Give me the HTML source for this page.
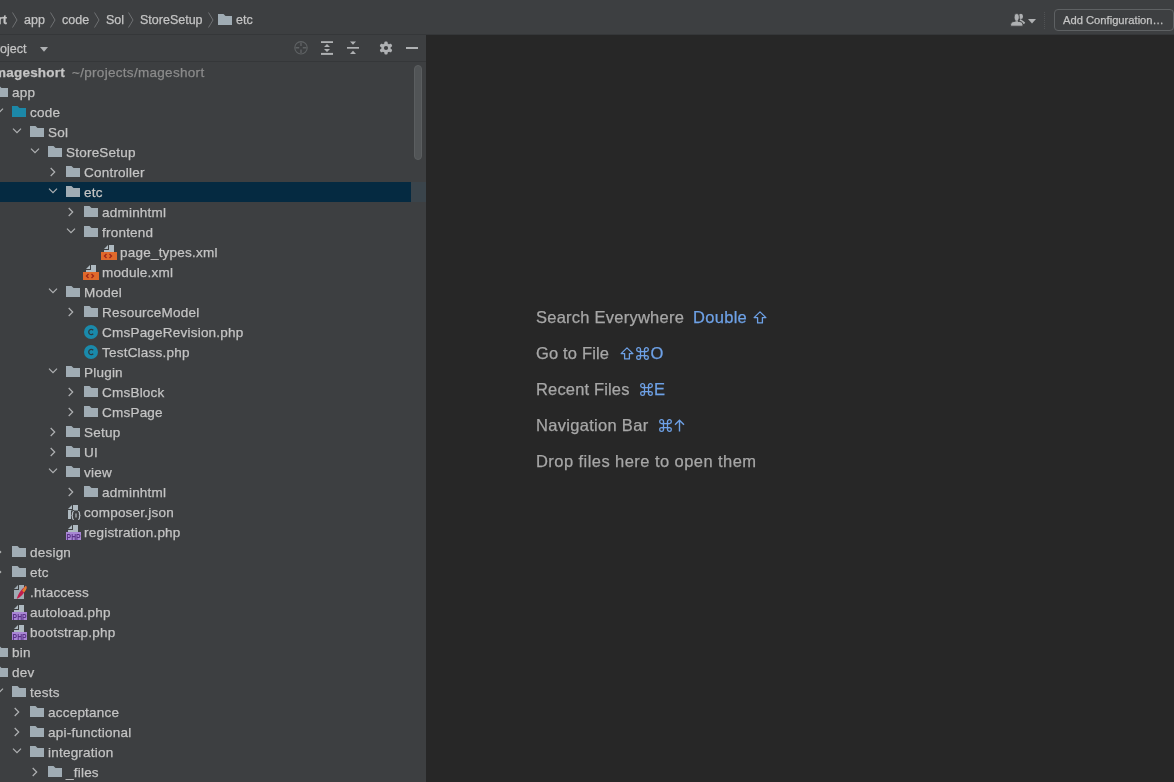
<!DOCTYPE html>
<html><head><meta charset="utf-8"><style>
*{margin:0;padding:0;box-sizing:border-box}
html,body{width:1174px;height:782px;overflow:hidden;background:#272727;font-family:"Liberation Sans",sans-serif;color:#c4c4c4}
.abs{position:absolute}
#top,#panel,#editor{will-change:transform}
#top{position:absolute;left:0;top:0;width:1174px;height:35px;background:#3d3f41;border-bottom:1px solid #353739}
#panel{position:absolute;left:0;top:35px;width:426px;height:747px;background:#3d3f41;overflow:hidden}
#phead{position:absolute;left:0;top:0;width:426px;height:27px;border-bottom:1px solid #353739}
#editor{position:absolute;left:426px;top:35px;width:748px;height:747px;background:#272727}
.row{position:absolute;left:0;width:411px;height:20px}
.row.sel{background:#052a41}
.t{position:absolute;top:0.8px;line-height:20px;font-size:13.5px;white-space:nowrap;letter-spacing:0.22px}
.t,.bc,.hint{-webkit-text-stroke-width:0.25px}
.t.b{font-weight:bold}
.t.g{color:#8b8b8b}
.ic{position:absolute;overflow:visible}
.bc{position:absolute;top:3px;line-height:34px;font-size:12.5px;white-space:nowrap;color:#c4c4c4}
.hint{position:absolute;left:110px;font-size:16.5px;letter-spacing:0.3px;white-space:nowrap;color:#a7a7a7;line-height:20px}
.hint.blue{color:#6ea1e6}
</style></head><body>
<div id="top">
  <span class="bc b" style="left:-57px;font-weight:bold">mageshort</span>
  <svg class="ic" style="left:12px;top:12px" width="6" height="16" viewBox="0 0 6 16"><path d="M0.5 0.5L5 8L0.5 15.5" fill="none" stroke="#6e7072" stroke-width="1"/></svg>
  <span class="bc" style="left:24px">app</span>
  <svg class="ic" style="left:50px;top:12px" width="6" height="16" viewBox="0 0 6 16"><path d="M0.5 0.5L5 8L0.5 15.5" fill="none" stroke="#6e7072" stroke-width="1"/></svg>
  <span class="bc" style="left:62px">code</span>
  <svg class="ic" style="left:94px;top:12px" width="6" height="16" viewBox="0 0 6 16"><path d="M0.5 0.5L5 8L0.5 15.5" fill="none" stroke="#6e7072" stroke-width="1"/></svg>
  <span class="bc" style="left:106px">Sol</span>
  <svg class="ic" style="left:128px;top:12px" width="6" height="16" viewBox="0 0 6 16"><path d="M0.5 0.5L5 8L0.5 15.5" fill="none" stroke="#6e7072" stroke-width="1"/></svg>
  <span class="bc" style="left:140px">StoreSetup</span>
  <svg class="ic" style="left:208px;top:12px" width="6" height="16" viewBox="0 0 6 16"><path d="M0.5 0.5L5 8L0.5 15.5" fill="none" stroke="#6e7072" stroke-width="1"/></svg>
  <svg class="ic" style="left:218px;top:14px" width="14" height="11" viewBox="0 0 14 11"><path d="M0 0H5.5L7.5 2H14V11H0Z" fill="#a0acb4"/></svg>
  <span class="bc" style="left:236px">etc</span>
  <!-- right -->
  <svg class="ic" style="left:1010px;top:13px" width="16" height="14" viewBox="0 0 16 14">
    <ellipse cx="10.9" cy="3.4" rx="2.1" ry="2.6" fill="#afb1b3"/>
    <path d="M10.5 6L15.2 9.6L14 11.2L9.5 7.6Z" fill="#afb1b3"/>
    <path d="M6.7 0.6C8.4 0.6 9.3 2.2 9.3 4.2C9.3 5.8 8.6 7 8 7.6V8.2H5.4V7.6C4.8 7 4.1 5.8 4.1 4.2C4.1 2.2 5 0.6 6.7 0.6Z" fill="#afb1b3" stroke="#3d3f41" stroke-width="0.9"/>
    <path d="M0.6 13.2V11.6Q0.6 8.4 4.2 8.4H9.2Q12.9 8.4 12.9 11.6V13.2Z" fill="#afb1b3" stroke="#3d3f41" stroke-width="0.9"/>
    <path d="M5.4 7.5H8V8.8H5.4Z" fill="#afb1b3"/>
  </svg>
  <svg class="ic" style="left:1028px;top:19px" width="8" height="5" viewBox="0 0 8 5"><path d="M0 0H8L4 4.5Z" fill="#afb1b3"/></svg>
  <div class="abs" style="left:1044px;top:12px;width:1px;height:17px;border-left:1px dotted #505254"></div>
  <div class="abs" style="left:1054px;top:9px;width:120px;height:22px;border:1px solid #5e6163;border-radius:4px"></div>
  <span class="bc" style="left:1063px;font-size:11.2px;top:2.5px;line-height:34px">Add Configuration…</span>
</div>
<div id="panel">
  <div id="phead">
    <span class="bc" style="left:-12.4px;top:1px;line-height:27px;font-size:12.5px">Project</span>
    <svg class="ic" style="left:40px;top:12px" width="8" height="5" viewBox="0 0 8 5"><path d="M0 0H8L4 4.8Z" fill="#afb1b3"/></svg>
    <!-- locate -->
    <svg class="ic" style="left:294px;top:6px" width="14" height="14" viewBox="0 0 14 14"><circle cx="7" cy="6.8" r="6.2" fill="none" stroke="#5f6264" stroke-width="1.1"/><path d="M7 1.5V5M7 8.6V12.1M1.5 6.8H5.2M8.8 6.8H12.5" stroke="#5f6264" stroke-width="1.4"/></svg>
    <!-- expand -->
    <svg class="ic" style="left:320px;top:5px" width="14" height="16" viewBox="0 0 14 16"><rect x="1" y="1.2" width="12" height="1.8" fill="#afb1b3"/><rect x="1" y="12.9" width="12" height="2" fill="#afb1b3"/><path d="M4 7.1L7 4L10 7.1Z M4 8.9H10L7 11.9Z" fill="#afb1b3"/></svg>
    <!-- collapse -->
    <svg class="ic" style="left:347px;top:6px" width="12" height="14" viewBox="0 0 12 14"><path d="M3 0.5H9L6 3.7Z M3 13L6 9.8L9 13Z" fill="#afb1b3"/><rect x="0" y="6" width="12" height="1.7" fill="#afb1b3"/></svg>
    <!-- gear -->
    <svg class="ic" style="left:379px;top:6px" width="14" height="14" viewBox="0 0 14 14"><g fill="#afb1b3"><circle cx="7" cy="7" r="4.7"/><rect x="5.4" y="0.4" width="3.2" height="3.4" rx="1.1" transform="rotate(0 7 7)"/><rect x="5.4" y="0.4" width="3.2" height="3.4" rx="1.1" transform="rotate(60 7 7)"/><rect x="5.4" y="0.4" width="3.2" height="3.4" rx="1.1" transform="rotate(120 7 7)"/><rect x="5.4" y="0.4" width="3.2" height="3.4" rx="1.1" transform="rotate(180 7 7)"/><rect x="5.4" y="0.4" width="3.2" height="3.4" rx="1.1" transform="rotate(240 7 7)"/><rect x="5.4" y="0.4" width="3.2" height="3.4" rx="1.1" transform="rotate(300 7 7)"/></g><circle cx="7" cy="7" r="2.1" fill="#3d3f41"/></svg>
    <rect></rect>
    <div class="abs" style="left:406px;top:12px;width:12px;height:2px;background:#afb1b3"></div>
  </div>
  <div id="tree" class="abs" style="left:0;top:-35px;width:426px;height:782px">
<div class="row" style="top:62px"><span class="t b" style="left:-6px">mageshort</span><span class="t g" style="left:72px;letter-spacing:0.3px">~/projects/mageshort</span></div>
<div class="row" style="top:82px"><svg class="ic" style="left:-24.5px;top:6px" width="10" height="6" viewBox="0 0 10 6"><path d="M1 0.7L5 4.7L9 0.7" fill="none" stroke="#afb1b3" stroke-width="1.2"/></svg><svg class="ic" style="left:-6px;top:4px" width="14" height="11" viewBox="0 0 14 11"><path d="M0 0H5.5L7.5 2H14V11H0Z" fill="#a0acb4"/></svg><span class="t" style="left:12px">app</span></div>
<div class="row" style="top:102px"><svg class="ic" style="left:-6.5px;top:6px" width="10" height="6" viewBox="0 0 10 6"><path d="M1 0.7L5 4.7L9 0.7" fill="none" stroke="#afb1b3" stroke-width="1.2"/></svg><svg class="ic" style="left:12px;top:4px" width="14" height="11" viewBox="0 0 14 11"><path d="M0 0H5.5L7.5 2H14V11H0Z" fill="#1c88a8"/></svg><span class="t" style="left:30px">code</span></div>
<div class="row" style="top:122px"><svg class="ic" style="left:11.5px;top:6px" width="10" height="6" viewBox="0 0 10 6"><path d="M1 0.7L5 4.7L9 0.7" fill="none" stroke="#afb1b3" stroke-width="1.2"/></svg><svg class="ic" style="left:30px;top:4px" width="14" height="11" viewBox="0 0 14 11"><path d="M0 0H5.5L7.5 2H14V11H0Z" fill="#a0acb4"/></svg><span class="t" style="left:48px">Sol</span></div>
<div class="row" style="top:142px"><svg class="ic" style="left:29.5px;top:6px" width="10" height="6" viewBox="0 0 10 6"><path d="M1 0.7L5 4.7L9 0.7" fill="none" stroke="#afb1b3" stroke-width="1.2"/></svg><svg class="ic" style="left:48px;top:4px" width="14" height="11" viewBox="0 0 14 11"><path d="M0 0H5.5L7.5 2H14V11H0Z" fill="#a0acb4"/></svg><span class="t" style="left:66px">StoreSetup</span></div>
<div class="row" style="top:162px"><svg class="ic" style="left:49.5px;top:5px" width="6" height="10" viewBox="0 0 6 10"><path d="M0.7 1L4.7 5L0.7 9" fill="none" stroke="#afb1b3" stroke-width="1.2"/></svg><svg class="ic" style="left:66px;top:4px" width="14" height="11" viewBox="0 0 14 11"><path d="M0 0H5.5L7.5 2H14V11H0Z" fill="#a0acb4"/></svg><span class="t" style="left:84px">Controller</span></div>
<div class="row sel" style="top:182px"><svg class="ic" style="left:47.5px;top:6px" width="10" height="6" viewBox="0 0 10 6"><path d="M1 0.7L5 4.7L9 0.7" fill="none" stroke="#afb1b3" stroke-width="1.2"/></svg><svg class="ic" style="left:66px;top:4px" width="14" height="11" viewBox="0 0 14 11"><path d="M0 0H5.5L7.5 2H14V11H0Z" fill="#a0acb4"/></svg><span class="t" style="left:84px">etc</span></div>
<div class="row" style="top:202px"><svg class="ic" style="left:67.5px;top:5px" width="6" height="10" viewBox="0 0 6 10"><path d="M0.7 1L4.7 5L0.7 9" fill="none" stroke="#afb1b3" stroke-width="1.2"/></svg><svg class="ic" style="left:84px;top:4px" width="14" height="11" viewBox="0 0 14 11"><path d="M0 0H5.5L7.5 2H14V11H0Z" fill="#a0acb4"/></svg><span class="t" style="left:102px">adminhtml</span></div>
<div class="row" style="top:222px"><svg class="ic" style="left:65.5px;top:6px" width="10" height="6" viewBox="0 0 10 6"><path d="M1 0.7L5 4.7L9 0.7" fill="none" stroke="#afb1b3" stroke-width="1.2"/></svg><svg class="ic" style="left:84px;top:4px" width="14" height="11" viewBox="0 0 14 11"><path d="M0 0H5.5L7.5 2H14V11H0Z" fill="#a0acb4"/></svg><span class="t" style="left:102px">frontend</span></div>
<div class="row" style="top:242px"><svg class="ic" style="left:103.5px;top:3px" width="10" height="7" viewBox="0 0 10 7"><path d="M0 4L4 0V4Z" fill="#aeb9c0"/><path d="M5 0H10V7H0V5H5Z" fill="#aeb9c0"/></svg><svg class="ic" style="left:101px;top:10px" width="16" height="8" viewBox="0 0 16 8"><rect width="16" height="8" fill="#e0692b"/><path d="M5.5 2L3.5 4L5.5 6M8.5 2L10.5 4L8.5 6" fill="none" stroke="#9c2418" stroke-width="1.3"/></svg><span class="t" style="left:120px">page_types.xml</span></div>
<div class="row" style="top:262px"><svg class="ic" style="left:85.5px;top:3px" width="10" height="7" viewBox="0 0 10 7"><path d="M0 4L4 0V4Z" fill="#aeb9c0"/><path d="M5 0H10V7H0V5H5Z" fill="#aeb9c0"/></svg><svg class="ic" style="left:83px;top:10px" width="16" height="8" viewBox="0 0 16 8"><rect width="16" height="8" fill="#e0692b"/><path d="M5.5 2L3.5 4L5.5 6M8.5 2L10.5 4L8.5 6" fill="none" stroke="#9c2418" stroke-width="1.3"/></svg><span class="t" style="left:102px">module.xml</span></div>
<div class="row" style="top:282px"><svg class="ic" style="left:47.5px;top:6px" width="10" height="6" viewBox="0 0 10 6"><path d="M1 0.7L5 4.7L9 0.7" fill="none" stroke="#afb1b3" stroke-width="1.2"/></svg><svg class="ic" style="left:66px;top:4px" width="14" height="11" viewBox="0 0 14 11"><path d="M0 0H5.5L7.5 2H14V11H0Z" fill="#a0acb4"/></svg><span class="t" style="left:84px">Model</span></div>
<div class="row" style="top:302px"><svg class="ic" style="left:67.5px;top:5px" width="6" height="10" viewBox="0 0 6 10"><path d="M0.7 1L4.7 5L0.7 9" fill="none" stroke="#afb1b3" stroke-width="1.2"/></svg><svg class="ic" style="left:84px;top:4px" width="14" height="11" viewBox="0 0 14 11"><path d="M0 0H5.5L7.5 2H14V11H0Z" fill="#a0acb4"/></svg><span class="t" style="left:102px">ResourceModel</span></div>
<div class="row" style="top:322px"><svg class="ic" style="left:84px;top:3px" width="14" height="14" viewBox="0 0 14 14"><circle cx="7" cy="7" r="7" fill="#1a8aab"/><path d="M9.2 5.2A2.6 2.6 0 1 0 9.2 8.8" fill="none" stroke="#2b3a40" stroke-width="1.3"/></svg><span class="t" style="left:102px">CmsPageRevision.php</span></div>
<div class="row" style="top:342px"><svg class="ic" style="left:84px;top:3px" width="14" height="14" viewBox="0 0 14 14"><circle cx="7" cy="7" r="7" fill="#1a8aab"/><path d="M9.2 5.2A2.6 2.6 0 1 0 9.2 8.8" fill="none" stroke="#2b3a40" stroke-width="1.3"/></svg><span class="t" style="left:102px">TestClass.php</span></div>
<div class="row" style="top:362px"><svg class="ic" style="left:47.5px;top:6px" width="10" height="6" viewBox="0 0 10 6"><path d="M1 0.7L5 4.7L9 0.7" fill="none" stroke="#afb1b3" stroke-width="1.2"/></svg><svg class="ic" style="left:66px;top:4px" width="14" height="11" viewBox="0 0 14 11"><path d="M0 0H5.5L7.5 2H14V11H0Z" fill="#a0acb4"/></svg><span class="t" style="left:84px">Plugin</span></div>
<div class="row" style="top:382px"><svg class="ic" style="left:67.5px;top:5px" width="6" height="10" viewBox="0 0 6 10"><path d="M0.7 1L4.7 5L0.7 9" fill="none" stroke="#afb1b3" stroke-width="1.2"/></svg><svg class="ic" style="left:84px;top:4px" width="14" height="11" viewBox="0 0 14 11"><path d="M0 0H5.5L7.5 2H14V11H0Z" fill="#a0acb4"/></svg><span class="t" style="left:102px">CmsBlock</span></div>
<div class="row" style="top:402px"><svg class="ic" style="left:67.5px;top:5px" width="6" height="10" viewBox="0 0 6 10"><path d="M0.7 1L4.7 5L0.7 9" fill="none" stroke="#afb1b3" stroke-width="1.2"/></svg><svg class="ic" style="left:84px;top:4px" width="14" height="11" viewBox="0 0 14 11"><path d="M0 0H5.5L7.5 2H14V11H0Z" fill="#a0acb4"/></svg><span class="t" style="left:102px">CmsPage</span></div>
<div class="row" style="top:422px"><svg class="ic" style="left:49.5px;top:5px" width="6" height="10" viewBox="0 0 6 10"><path d="M0.7 1L4.7 5L0.7 9" fill="none" stroke="#afb1b3" stroke-width="1.2"/></svg><svg class="ic" style="left:66px;top:4px" width="14" height="11" viewBox="0 0 14 11"><path d="M0 0H5.5L7.5 2H14V11H0Z" fill="#a0acb4"/></svg><span class="t" style="left:84px">Setup</span></div>
<div class="row" style="top:442px"><svg class="ic" style="left:49.5px;top:5px" width="6" height="10" viewBox="0 0 6 10"><path d="M0.7 1L4.7 5L0.7 9" fill="none" stroke="#afb1b3" stroke-width="1.2"/></svg><svg class="ic" style="left:66px;top:4px" width="14" height="11" viewBox="0 0 14 11"><path d="M0 0H5.5L7.5 2H14V11H0Z" fill="#a0acb4"/></svg><span class="t" style="left:84px">UI</span></div>
<div class="row" style="top:462px"><svg class="ic" style="left:47.5px;top:6px" width="10" height="6" viewBox="0 0 10 6"><path d="M1 0.7L5 4.7L9 0.7" fill="none" stroke="#afb1b3" stroke-width="1.2"/></svg><svg class="ic" style="left:66px;top:4px" width="14" height="11" viewBox="0 0 14 11"><path d="M0 0H5.5L7.5 2H14V11H0Z" fill="#a0acb4"/></svg><span class="t" style="left:84px">view</span></div>
<div class="row" style="top:482px"><svg class="ic" style="left:67.5px;top:5px" width="6" height="10" viewBox="0 0 6 10"><path d="M0.7 1L4.7 5L0.7 9" fill="none" stroke="#afb1b3" stroke-width="1.2"/></svg><svg class="ic" style="left:84px;top:4px" width="14" height="11" viewBox="0 0 14 11"><path d="M0 0H5.5L7.5 2H14V11H0Z" fill="#a0acb4"/></svg><span class="t" style="left:102px">adminhtml</span></div>
<div class="row" style="top:502px"><svg class="ic" style="left:68px;top:3px" width="15" height="16" viewBox="0 0 15 16"><path d="M0 4L4 0V4Z" fill="#aeb9c0"/><path d="M5 0H10V5.5H3V14H0V5H5Z" fill="#aeb9c0"/><g fill="none" stroke="#3d3f41" stroke-width="3"><path d="M6 6.5Q4.5 6.5 4.5 8V9.6Q4.5 10.5 3.5 10.5Q4.5 10.5 4.5 11.4V13Q4.5 14.5 6 14.5M10 6.5Q11.5 6.5 11.5 8V9.6Q11.5 10.5 12.5 10.5Q11.5 10.5 11.5 11.4V13Q11.5 14.5 10 14.5"/></g><g fill="none" stroke="#b5bcc2" stroke-width="1.2"><path d="M6 6.5Q4.5 6.5 4.5 8V9.6Q4.5 10.5 3.5 10.5Q4.5 10.5 4.5 11.4V13Q4.5 14.5 6 14.5M10 6.5Q11.5 6.5 11.5 8V9.6Q11.5 10.5 12.5 10.5Q11.5 10.5 11.5 11.4V13Q11.5 14.5 10 14.5M8 8.5V12.5"/></g></svg><span class="t" style="left:84px">composer.json</span></div>
<div class="row" style="top:522px"><svg class="ic" style="left:68px;top:3px" width="10" height="7" viewBox="0 0 10 7"><path d="M0 4L4 0V4Z" fill="#aeb9c0"/><path d="M5 0H10V7H0V5H5Z" fill="#aeb9c0"/></svg><svg class="ic" style="left:66px;top:10px" width="15" height="8" viewBox="0 0 15 8"><rect width="15" height="8" fill="#a886d4"/><text x="0.6" y="7.6" font-family="Liberation Sans" font-weight="bold" font-size="8.6" fill="#5b3388" textLength="14" lengthAdjust="spacingAndGlyphs">PHP</text></svg><span class="t" style="left:84px">registration.php</span></div>
<div class="row" style="top:542px"><svg class="ic" style="left:-4.5px;top:5px" width="6" height="10" viewBox="0 0 6 10"><path d="M0.7 1L4.7 5L0.7 9" fill="none" stroke="#afb1b3" stroke-width="1.2"/></svg><svg class="ic" style="left:12px;top:4px" width="14" height="11" viewBox="0 0 14 11"><path d="M0 0H5.5L7.5 2H14V11H0Z" fill="#a0acb4"/></svg><span class="t" style="left:30px">design</span></div>
<div class="row" style="top:562px"><svg class="ic" style="left:-4.5px;top:5px" width="6" height="10" viewBox="0 0 6 10"><path d="M0.7 1L4.7 5L0.7 9" fill="none" stroke="#afb1b3" stroke-width="1.2"/></svg><svg class="ic" style="left:12px;top:4px" width="14" height="11" viewBox="0 0 14 11"><path d="M0 0H5.5L7.5 2H14V11H0Z" fill="#a0acb4"/></svg><span class="t" style="left:30px">etc</span></div>
<div class="row" style="top:582px"><svg class="ic" style="left:14px;top:3px" width="14" height="15" viewBox="0 0 14 15"><path d="M0 4L4 0V4Z" fill="#a0acb4"/><path d="M5 0H10V14H0V5H5Z" fill="#a0acb4"/><path d="M2.8 14C3.5 10.5 6.5 5 11.8 0.8C12.9 1.6 12.8 3.2 12.2 4.3C9.8 8.5 7 12 2.8 14Z" fill="#c21e4c"/><path d="M8.2 5.8C9.2 4 10.5 2.2 11.8 0.8C12.9 1.6 12.8 3.2 12.2 4.3C11.5 5.5 10.8 6.5 10 7.5Z" fill="#e0822e"/></svg><span class="t" style="left:30px">.htaccess</span></div>
<div class="row" style="top:602px"><svg class="ic" style="left:14px;top:3px" width="10" height="7" viewBox="0 0 10 7"><path d="M0 4L4 0V4Z" fill="#aeb9c0"/><path d="M5 0H10V7H0V5H5Z" fill="#aeb9c0"/></svg><svg class="ic" style="left:12px;top:10px" width="15" height="8" viewBox="0 0 15 8"><rect width="15" height="8" fill="#a886d4"/><text x="0.6" y="7.6" font-family="Liberation Sans" font-weight="bold" font-size="8.6" fill="#5b3388" textLength="14" lengthAdjust="spacingAndGlyphs">PHP</text></svg><span class="t" style="left:30px">autoload.php</span></div>
<div class="row" style="top:622px"><svg class="ic" style="left:14px;top:3px" width="10" height="7" viewBox="0 0 10 7"><path d="M0 4L4 0V4Z" fill="#aeb9c0"/><path d="M5 0H10V7H0V5H5Z" fill="#aeb9c0"/></svg><svg class="ic" style="left:12px;top:10px" width="15" height="8" viewBox="0 0 15 8"><rect width="15" height="8" fill="#a886d4"/><text x="0.6" y="7.6" font-family="Liberation Sans" font-weight="bold" font-size="8.6" fill="#5b3388" textLength="14" lengthAdjust="spacingAndGlyphs">PHP</text></svg><span class="t" style="left:30px">bootstrap.php</span></div>
<div class="row" style="top:642px"><svg class="ic" style="left:-22.5px;top:5px" width="6" height="10" viewBox="0 0 6 10"><path d="M0.7 1L4.7 5L0.7 9" fill="none" stroke="#afb1b3" stroke-width="1.2"/></svg><svg class="ic" style="left:-6px;top:4px" width="14" height="11" viewBox="0 0 14 11"><path d="M0 0H5.5L7.5 2H14V11H0Z" fill="#a0acb4"/></svg><span class="t" style="left:12px">bin</span></div>
<div class="row" style="top:662px"><svg class="ic" style="left:-24.5px;top:6px" width="10" height="6" viewBox="0 0 10 6"><path d="M1 0.7L5 4.7L9 0.7" fill="none" stroke="#afb1b3" stroke-width="1.2"/></svg><svg class="ic" style="left:-6px;top:4px" width="14" height="11" viewBox="0 0 14 11"><path d="M0 0H5.5L7.5 2H14V11H0Z" fill="#a0acb4"/></svg><span class="t" style="left:12px">dev</span></div>
<div class="row" style="top:682px"><svg class="ic" style="left:-6.5px;top:6px" width="10" height="6" viewBox="0 0 10 6"><path d="M1 0.7L5 4.7L9 0.7" fill="none" stroke="#afb1b3" stroke-width="1.2"/></svg><svg class="ic" style="left:12px;top:4px" width="14" height="11" viewBox="0 0 14 11"><path d="M0 0H5.5L7.5 2H14V11H0Z" fill="#a0acb4"/></svg><span class="t" style="left:30px">tests</span></div>
<div class="row" style="top:702px"><svg class="ic" style="left:13.5px;top:5px" width="6" height="10" viewBox="0 0 6 10"><path d="M0.7 1L4.7 5L0.7 9" fill="none" stroke="#afb1b3" stroke-width="1.2"/></svg><svg class="ic" style="left:30px;top:4px" width="14" height="11" viewBox="0 0 14 11"><path d="M0 0H5.5L7.5 2H14V11H0Z" fill="#a0acb4"/></svg><span class="t" style="left:48px">acceptance</span></div>
<div class="row" style="top:722px"><svg class="ic" style="left:13.5px;top:5px" width="6" height="10" viewBox="0 0 6 10"><path d="M0.7 1L4.7 5L0.7 9" fill="none" stroke="#afb1b3" stroke-width="1.2"/></svg><svg class="ic" style="left:30px;top:4px" width="14" height="11" viewBox="0 0 14 11"><path d="M0 0H5.5L7.5 2H14V11H0Z" fill="#a0acb4"/></svg><span class="t" style="left:48px">api-functional</span></div>
<div class="row" style="top:742px"><svg class="ic" style="left:11.5px;top:6px" width="10" height="6" viewBox="0 0 10 6"><path d="M1 0.7L5 4.7L9 0.7" fill="none" stroke="#afb1b3" stroke-width="1.2"/></svg><svg class="ic" style="left:30px;top:4px" width="14" height="11" viewBox="0 0 14 11"><path d="M0 0H5.5L7.5 2H14V11H0Z" fill="#a0acb4"/></svg><span class="t" style="left:48px">integration</span></div>
<div class="row" style="top:762px"><svg class="ic" style="left:31.5px;top:5px" width="6" height="10" viewBox="0 0 6 10"><path d="M0.7 1L4.7 5L0.7 9" fill="none" stroke="#afb1b3" stroke-width="1.2"/></svg><svg class="ic" style="left:48px;top:4px" width="14" height="11" viewBox="0 0 14 11"><path d="M0 0H5.5L7.5 2H14V11H0Z" fill="#a0acb4"/></svg><span class="t" style="left:66px">_files</span></div>
  </div>
  <div class="abs" style="left:411px;top:147px;width:15px;height:20px;background:#3a444b"></div>
  <div class="abs" style="left:414px;top:30px;width:8px;height:95px;border-radius:4px;background:#515456;border:1px solid #5b5e60"></div>
</div>
<div id="editor">
  <div class="hint" style="top:272px;letter-spacing:0.24px">Search Everywhere</div><div class="hint blue" style="left:267px;top:272px">Double</div><svg class="ic" style="left:327px;top:275.5px" width="14" height="13" viewBox="0 0 14 13"><path d="M7 0.9L12.9 6.6H9.4V11.9H4.6V6.6H1.1Z" fill="none" stroke="#6ea1e6" stroke-width="1.3" stroke-linejoin="round"/></svg>
  <div class="hint" style="top:308px;letter-spacing:0.16px">Go to File</div><svg class="ic" style="left:193.5px;top:311.5px" width="14" height="13" viewBox="0 0 14 13"><path d="M7 0.9L12.9 6.6H9.4V11.9H4.6V6.6H1.1Z" fill="none" stroke="#6ea1e6" stroke-width="1.3" stroke-linejoin="round"/></svg><svg class="ic" style="left:209.5px;top:311.5px" width="13" height="13" viewBox="0 0 13 13"><g fill="none" stroke="#6ea1e6" stroke-width="1.25"><path d="M4.5 2.6V10.4M8.5 2.6V10.4M2.6 4.5H10.4M2.6 8.5H10.4"/><path d="M4.5 4.5H2.6A1.9 1.9 0 1 1 4.5 2.6ZM8.5 4.5V2.6A1.9 1.9 0 1 1 10.4 4.5ZM8.5 8.5H10.4A1.9 1.9 0 1 1 8.5 10.4ZM4.5 8.5V10.4A1.9 1.9 0 1 1 2.6 8.5Z"/></g></svg><div class="hint blue" style="left:224.5px;top:308px">O</div>
  <div class="hint" style="top:344px;letter-spacing:0.16px">Recent Files</div><svg class="ic" style="left:214px;top:347.5px" width="13" height="13" viewBox="0 0 13 13"><g fill="none" stroke="#6ea1e6" stroke-width="1.25"><path d="M4.5 2.6V10.4M8.5 2.6V10.4M2.6 4.5H10.4M2.6 8.5H10.4"/><path d="M4.5 4.5H2.6A1.9 1.9 0 1 1 4.5 2.6ZM8.5 4.5V2.6A1.9 1.9 0 1 1 10.4 4.5ZM8.5 8.5H10.4A1.9 1.9 0 1 1 8.5 10.4ZM4.5 8.5V10.4A1.9 1.9 0 1 1 2.6 8.5Z"/></g></svg><div class="hint blue" style="left:228px;top:344px">E</div>
  <div class="hint" style="top:380px">Navigation Bar</div><svg class="ic" style="left:232.5px;top:383.5px" width="13" height="13" viewBox="0 0 13 13"><g fill="none" stroke="#6ea1e6" stroke-width="1.25"><path d="M4.5 2.6V10.4M8.5 2.6V10.4M2.6 4.5H10.4M2.6 8.5H10.4"/><path d="M4.5 4.5H2.6A1.9 1.9 0 1 1 4.5 2.6ZM8.5 4.5V2.6A1.9 1.9 0 1 1 10.4 4.5ZM8.5 8.5H10.4A1.9 1.9 0 1 1 8.5 10.4ZM4.5 8.5V10.4A1.9 1.9 0 1 1 2.6 8.5Z"/></g></svg><svg class="ic" style="left:247.5px;top:383.5px" width="11" height="13" viewBox="0 0 11 13"><g fill="none" stroke="#6ea1e6" stroke-width="1.4"><path d="M5.5 1.5V12.5M1 5.8L5.5 1.3L10 5.8"/></g></svg>
  <div class="hint" style="top:416px;letter-spacing:0.44px">Drop files here to open them</div>
</div>
</body></html>
